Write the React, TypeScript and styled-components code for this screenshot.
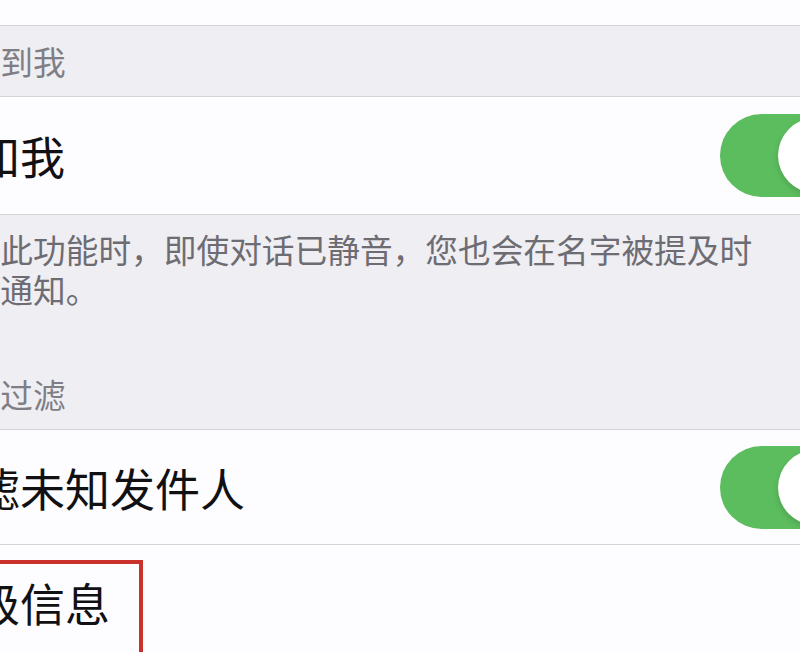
import styled, { createGlobalStyle } from 'styled-components'

const GlobalStyle = createGlobalStyle`
  html,
  body {
    margin: 0;
    padding: 0;
    overflow: hidden;
    background: #efeef3;
  }

  body {
    font-family: 'Noto Sans CJK SC', 'Noto Sans', sans-serif;
  }
`

const Page = styled.div`
  width: 1013px;
  margin-left: -113px;
  display: flex;
  flex-direction: column;
`

const Cell = styled.div<{ $h: number }>`
  position: relative;
  height: ${(p) => p.$h}px;
  padding: 0 43px;
  display: flex;
  align-items: center;
  justify-content: space-between;
  background: #fdfcfe;
  border-bottom: 1px solid #d4d3d8;
`

const Label = styled.span`
  font-size: 45px;
  line-height: 45px;
  color: #111113;
  white-space: nowrap;
`

const Header = styled.div<{ $h: number }>`
  height: ${(p) => p.$h}px;
  padding: 0 0 19px 48px;
  box-sizing: border-box;
  display: flex;
  align-items: flex-end;
  font-size: 32.7px;
  line-height: 33px;
  color: #7f7e84;
  border-bottom: 1px solid #d4d3d8;
`

const Footer = styled.div`
  height: 94px;
  box-sizing: border-box;
  padding: 14px 0 0 48px;

  p {
    margin: 0;
    max-width: 830px;
    font-size: 32.7px;
    line-height: 40px;
    color: #6d6c72;
  }
`

const Toggle = styled.div<{ $on: boolean }>`
  position: relative;
  flex-shrink: 0;
  width: 137px;
  height: 83px;
  border-radius: 42px;
  background: ${(p) => (p.$on ? '#5cbd5e' : '#e6e5ea')};

  &::after {
    content: '';
    position: absolute;
    top: 4px;
    left: ${(p) => (p.$on ? '58px' : '4px')};
    width: 75px;
    height: 75px;
    border-radius: 50%;
    background: #ffffff;
    box-shadow: 0 3px 6px rgba(0, 0, 0, 0.15);
  }
`

const Highlight = styled.div`
  position: absolute;
  top: 15px;
  left: 20px;
  width: 236px;
  height: 130px;
  box-sizing: border-box;
  border: 4px solid #c9312b;
  pointer-events: none;
`

export default function App() {
  return (
    <>
      <GlobalStyle />
      <Page>
        <Cell $h={25} />
        <Header $h={71}>提及到我</Header>
        <Cell $h={117}>
          <Label>通知我</Label>
          <Toggle $on />
        </Cell>
        <Footer>
          <p>启用此功能时，即使对话已静音，您也会在名字被提及时收到通知。</p>
        </Footer>
        <Header $h={121}>信息过滤</Header>
        <Cell $h={114}>
          <Label>过滤未知发件人</Label>
          <Toggle $on />
        </Cell>
        <Cell $h={115}>
          <Label>分级信息</Label>
          <Highlight />
        </Cell>
      </Page>
    </>
  )
}
